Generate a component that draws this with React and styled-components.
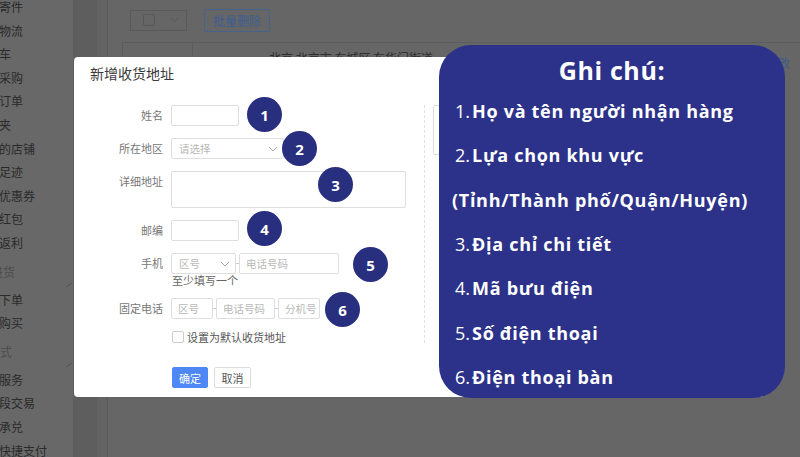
import React from "react";
import styled, { createGlobalStyle } from "styled-components";

const GlobalStyle = createGlobalStyle`
  html, body {
    margin: 0;
    padding: 0;
  }
  body {
    font-family: "Noto Sans CJK SC", "Noto Sans", sans-serif;
    background: #666;
  }
`;

const sideItems = [
  { text: "我的寄件" },
  { text: "查看物流" },
  { text: "购物车" },
  { text: "我的采购" },
  { text: "我的订单" },
  { text: "收藏夹" },
  { text: "关注的店铺" },
  { text: "我的足迹" },
  { text: "我的优惠券" },
  { text: "我的红包" },
  { text: "我的返利" },
  { text: "进货", header: true, shift: -9 },
  { text: "快速下单" },
  { text: "再次购买" },
  { text: "方式", header: true, shift: -12 },
  { text: "增值服务" },
  { text: "分阶段交易" },
  { text: "商业承兑" },
  { text: "开通快捷支付" },
];

const notes = [
  { num: "1.", text: "Họ và tên người nhận hàng" },
  { num: "2.", text: "Lựa chọn khu vực" },
  { num: "", text: "(Tỉnh/Thành phố/Quận/Huyện)" },
  { num: "3.", text: "Địa chỉ chi tiết" },
  { num: "4.", text: "Mã bưu điện" },
  { num: "5.", text: "Số điện thoại" },
  { num: "6.", text: "Điện thoại bàn" },
];

function Chevron({ color = "#999", size = 10 }) {
  return (
    <svg width={size} height={size * 0.6} viewBox="0 0 10 6">
      <polyline points="1,1 5,5 9,1" fill="none" stroke={color} strokeWidth="1" />
    </svg>
  );
}

function App() {
  return (
    <>
      <GlobalStyle />
      <Page>
        <Sidebar>
          <SideList>
            {sideItems.map((item, i) => (
              <SideItem key={i} $header={item.header} $shift={item.shift ?? -25}>
                {item.text}
                {item.header && (
                  <HeaderCaret>
                    <svg width="8" height="6" viewBox="0 0 8 6">
                      <polyline points="1,5 7,1" fill="none" stroke="#555" strokeWidth="1" />
                    </svg>
                  </HeaderCaret>
                )}
              </SideItem>
            ))}
          </SideList>
        </Sidebar>
        <Gutter />
        <Main>
          <Card>
            <Toolbar>
              <SelectAll>
                <MiniCheck />
                <Chevron color="#575757" size={9} />
              </SelectAll>
              <BatchButton>批量删除</BatchButton>
            </Toolbar>
            <TableRow>
              <Cell />
              <AddressCell>北京 北京市 东城区 东华门街道</AddressCell>
              <EditCell>修改</EditCell>
            </TableRow>
          </Card>
        </Main>

        <Modal>
          <ModalTitle>新增收货地址</ModalTitle>
          <ModalBody>
            <FormCol>
              <Field>
                <Label>姓名</Label>
                <Inputs>
                  <Input $w={68} />
                </Inputs>
                <Badge $x={157} $y={-8}>1</Badge>
              </Field>
              <Field>
                <Label>所在地区</Label>
                <Inputs>
                  <SelectBox $w={113}>
                    请选择
                    <Chevron color="#aaa" size={10} />
                  </SelectBox>
                </Inputs>
                <Badge $x={192} $y={-7}>2</Badge>
              </Field>
              <Field>
                <Label>详细地址</Label>
                <Inputs>
                  <Input $w={235} $h={37} />
                </Inputs>
                <Badge $x={228} $y={-4}>3</Badge>
              </Field>
              <Field>
                <Label>邮编</Label>
                <Inputs>
                  <Input $w={68} />
                </Inputs>
                <Badge $x={157} $y={-9}>4</Badge>
              </Field>
              <Field>
                <Label>手机</Label>
                <div>
                  <Inputs>
                    <SelectBox $w={65}>
                      区号
                      <Chevron color="#aaa" size={10} />
                    </SelectBox>
                    <Dash />
                    <Input $w={100}>电话号码</Input>
                  </Inputs>
                  <Hint>至少填写一个</Hint>
                </div>
                <Badge $x={263} $y={-6}>5</Badge>
              </Field>
              <Field>
                <Label>固定电话</Label>
                <Inputs>
                  <Input $w={42}>区号</Input>
                  <Dash />
                  <Input $w={59}>电话号码</Input>
                  <Dash />
                  <Input $w={42}>分机号</Input>
                </Inputs>
                <Badge $x={235} $y={-6}>6</Badge>
              </Field>
              <CheckRow>
                <CheckBox />
                设置为默认收货地址
              </CheckRow>
              <Actions>
                <Button $primary>确定</Button>
                <Button>取消</Button>
              </Actions>
            </FormCol>
            <SidePane>
              <MapBox />
            </SidePane>
          </ModalBody>
        </Modal>

        <NotePanel>
          <NoteTitle>Ghi chú:</NoteTitle>
          {notes.map((n, i) => (
            <NoteLine key={i} $sub={!n.num}>
              {n.num && <NoteNum>{n.num}</NoteNum>}
              {n.text}
            </NoteLine>
          ))}
        </NotePanel>
      </Page>
    </>
  );
}

const Page = styled.div`
  position: relative;
  width: 800px;
  height: 457px;
  overflow: hidden;
  display: flex;
  background: #666;
`;

const Sidebar = styled.div`
  width: 73px;
  flex-shrink: 0;
  background: #686868;
  overflow: hidden;
`;

const SideList = styled.div`
  margin-top: -5px;
`;

const SideItem = styled.div`
  position: relative;
  height: ${(p) => (p.$header ? "33px" : "23.6px")};
  line-height: ${(p) => (p.$header ? "33px" : "23.6px")};
  font-size: 12px;
  white-space: nowrap;
  text-indent: ${(p) => p.$shift}px;
  color: ${(p) => (p.$header ? "#4c4c4c" : "#2a2a2a")};
`;

const HeaderCaret = styled.span`
  position: absolute;
  right: 0;
  top: 11px;
  text-indent: 0;
`;

const Gutter = styled.div`
  width: 24px;
  flex-shrink: 0;
  background: #5e5e5e;
`;

const Main = styled.div`
  flex: 1;
  padding-left: 10px;
  background: #636363;
`;

const Card = styled.div`
  height: 100%;
  background: #666;
  border-left: 1px solid #5b5b5b;
  padding-left: 14px;
`;

const Toolbar = styled.div`
  height: 42px;
  display: flex;
  align-items: center;
  padding-left: 8px;
  padding-bottom: 2px;
  box-sizing: border-box;
`;

const SelectAll = styled.div`
  width: 57px;
  height: 21px;
  box-sizing: border-box;
  border: 1px solid #5a5a5a;
  display: flex;
  align-items: center;
  justify-content: space-between;
  padding: 0 7px 0 12px;
`;

const MiniCheck = styled.div`
  width: 12px;
  height: 12px;
  box-sizing: border-box;
  border: 1px solid #575757;
  border-radius: 2px;
`;

const BatchButton = styled.div`
  margin-left: 17px;
  width: 66px;
  height: 23px;
  box-sizing: border-box;
  border: 1px solid #46628f;
  border-radius: 2px;
  display: flex;
  align-items: center;
  justify-content: center;
  font-size: 12px;
  color: #3e5d92;
`;

const TableRow = styled.div`
  display: grid;
  grid-template-columns: 70px 1fr 60px;
  height: 60px;
  border-top: 1px solid #5c5c5c;
  border-left: 1px solid #5c5c5c;
`;

const Cell = styled.div`
  border-right: 1px solid #5c5c5c;
`;

const AddressCell = styled.div`
  padding: 7px 0 0 76px;
  font-size: 12px;
  line-height: 16px;
  color: #2e2e2e;
`;

const EditCell = styled.div`
  padding: 13px 10px 0 0;
  text-align: right;
  font-size: 12px;
  line-height: 14px;
  color: #3e5b8c;
`;

const Modal = styled.div`
  position: absolute;
  left: 74px;
  top: 57px;
  width: 690px;
  height: 340px;
  background: #fff;
  border-radius: 4px;
`;

const ModalTitle = styled.div`
  padding: 6px 16px 0;
  font-size: 14px;
  line-height: 20px;
  color: #3a3a3a;
`;

const ModalBody = styled.div`
  display: flex;
  margin-top: 22px;
`;

const FormCol = styled.div`
  width: 350px;
  box-sizing: border-box;
  padding-left: 16px;
  display: flex;
  flex-direction: column;
  gap: 12px;
`;

const Field = styled.div`
  position: relative;
  display: grid;
  grid-template-columns: 73px 1fr;
  column-gap: 8px;
  align-items: start;
`;

const Label = styled.div`
  text-align: right;
  font-size: 11px;
  line-height: 21px;
  color: #777;
`;

const Inputs = styled.div`
  display: flex;
  align-items: center;
`;

const Input = styled.div`
  width: ${(p) => p.$w}px;
  height: ${(p) => p.$h || 21}px;
  box-sizing: border-box;
  border: 1px solid #dedede;
  border-radius: 2px;
  padding-left: 6px;
  font-size: 10.5px;
  line-height: 19px;
  color: #b8b8b8;
  white-space: nowrap;
  overflow: hidden;
`;

const SelectBox = styled(Input)`
  display: flex;
  align-items: center;
  justify-content: space-between;
  padding-left: 7px;
  padding-right: 5px;
`;

const Dash = styled.div`
  width: 3px;
  height: 1px;
  background: #ccc;
`;

const Hint = styled.div`
  font-size: 11px;
  line-height: 12px;
  color: #666;
  padding-left: 1px;
`;

const Badge = styled.div`
  position: absolute;
  left: ${(p) => p.$x}px;
  top: ${(p) => p.$y}px;
  width: 35px;
  height: 35px;
  border-radius: 50%;
  background: #272f7e;
  color: #fff;
  display: flex;
  align-items: center;
  justify-content: center;
  font-family: "Open Sans", "DejaVu Sans", sans-serif;
  font-weight: 700;
  font-size: 15px;
`;

const CheckRow = styled.div`
  display: flex;
  align-items: center;
  gap: 3px;
  padding-left: 82px;
  height: 12px;
  font-size: 11px;
  color: #555;
`;

const CheckBox = styled.div`
  width: 12px;
  height: 12px;
  box-sizing: border-box;
  border: 1px solid #ccc;
  border-radius: 2px;
`;

const Actions = styled.div`
  display: flex;
  gap: 6px;
  padding-left: 82px;
  margin-top: 12px;
`;

const Button = styled.div`
  width: ${(p) => (p.$primary ? 36 : 37)}px;
  height: 21px;
  box-sizing: border-box;
  border-radius: 2px;
  border: 1px solid ${(p) => (p.$primary ? "#4d88f5" : "#dcdcdc")};
  background: ${(p) => (p.$primary ? "#4d88f5" : "#fff")};
  color: ${(p) => (p.$primary ? "#fff" : "#555")};
  font-size: 11px;
  display: flex;
  align-items: center;
  justify-content: center;
`;

const SidePane = styled.div`
  height: 238px;
  border-left: 1px dashed #e2e2e2;
  padding-left: 8px;
  flex: 1;
`;

const MapBox = styled.div`
  height: 48px;
  border: 1px solid #ddd;
  border-radius: 2px;
`;

const NotePanel = styled.div`
  position: absolute;
  left: 439px;
  top: 45px;
  width: 346px;
  height: 353px;
  box-sizing: border-box;
  border-radius: 32px;
  background: #2c3289;
  color: #fff;
  padding: 10px 0 0 16px;
  font-family: "Open Sans", "DejaVu Sans", sans-serif;
`;

const NoteTitle = styled.div`
  margin-left: -16px;
  text-align: center;
  font-size: 25px;
  font-weight: 700;
  line-height: 30px;
  letter-spacing: 0.6px;
  margin-bottom: 4px;
`;

const NoteLine = styled.div`
  height: 44.3px;
  display: flex;
  align-items: center;
  font-size: 18px;
  font-weight: 700;
  letter-spacing: 0.7px;
  white-space: nowrap;
  margin-left: ${(p) => (p.$sub ? -3 : 0)}px;
`;

const NoteNum = styled.span`
  font-weight: 400;
  letter-spacing: 0;
  margin-right: 2px;
`;

export default App;
